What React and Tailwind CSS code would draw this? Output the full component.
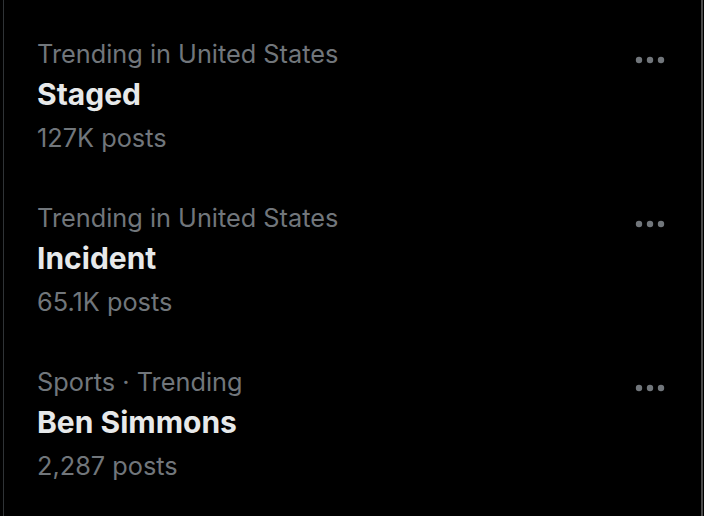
import React from 'react';

const trends = [
  { label: 'Trending in United States', title: 'Staged', posts: '127K posts' },
  { label: 'Trending in United States', title: 'Incident', posts: '65.1K posts' },
  { label: 'Sports · Trending', title: 'Ben Simmons', posts: '2,287 posts' },
];

const MoreDots = () => (
  <svg width="32" height="12" viewBox="0 0 32 12" fill="#71767b">
    <circle cx="5" cy="6" r="3.2" />
    <circle cx="16" cy="6" r="3.2" />
    <circle cx="27" cy="6" r="3.2" />
  </svg>
);

const TrendItem = ({ label, title, posts }) => (
  <div className="flex justify-between pt-6 pb-[24px] pl-[33px] pr-[35px]">
    <div className="flex flex-col">
      <span className="text-[25.3px] leading-[32px] text-[#71767b]">{label}</span>
      <span className="mt-1 text-[30px] leading-[40px] font-bold text-[#e7e9ea]">{title}</span>
      <span className="mt-[8px] text-[25.3px] leading-[32px] text-[#71767b]">{posts}</span>
    </div>
    <div className="pt-[16px]">
      <MoreDots />
    </div>
  </div>
);

export default function App() {
  return (
    <div className="w-[704px] h-[516px] bg-black overflow-hidden" style={{ fontFamily: 'Inter, "Liberation Sans", sans-serif' }}>
      <div className="ml-[3px] mr-[1px] h-full border-l border-r-2 border-l-[#2f3336] border-r-[#4b4b4b] pt-[14px]">
        {trends.map((t) => (
          <TrendItem key={t.title} {...t} />
        ))}
      </div>
    </div>
  );
}
